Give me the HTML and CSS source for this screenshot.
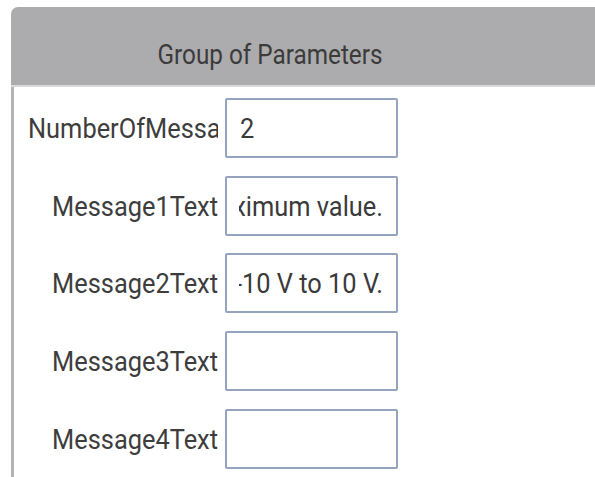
FILE: index.html
```html
<!DOCTYPE html>
<html>
<head>
	<title>Group of Parameters</title>
	<meta charset="utf-8">
	<meta name="viewport" content="width=device-width, initial-scale=1">
	<link rel="stylesheet" href="styles.css">
</head>
<body>

	<div class="panel">
		<div class="panel-header">
			<h1>Group of Parameters</h1>
		</div>
		<div class="panel-body">
			<div class="row">
				<label>NumberOfMessages</label>
				<div class="field first"><div class="clip"><span class="value">2</span></div></div>
			</div>
			<div class="row">
				<label>Message1Text</label>
				<div class="field"><div class="clip"><span class="value">Input exceeds the maximum value.</span></div></div>
			</div>
			<div class="row">
				<label>Message2Text</label>
				<div class="field"><div class="clip"><span class="value">Allowed range is -10 V to 10 V.</span></div></div>
			</div>
			<div class="row">
				<label>Message3Text</label>
				<div class="field"><div class="clip"></div></div>
			</div>
			<div class="row">
				<label>Message4Text</label>
				<div class="field"><div class="clip"></div></div>
			</div>
		</div>
	</div>

</body>
</html>
```

FILE: styles.css
```css
* {
	font-family: Roboto, "Liberation Sans", sans-serif;
	box-sizing: border-box;
}
body {
	background-color: #fff;
	margin: 0;
	padding: 7px 0 0 11px;
}

div.panel {
	border-top-left-radius: 7px;
	overflow: hidden;
	height: 470px;
}
div.panel-header {
	background-color: #acabad;
	height: 80px;
	border-bottom: 2px solid #d9d9d9;
	padding-right: 66px;
	display: flex;
	align-items: center;
	justify-content: center;
}
h1 {
	margin: 0;
	padding-top: 14px;
	font-size: 24.3px;
	font-weight: normal;
	color: #3b3b3b;
	transform: scaleY(1.16);
}

div.panel-body {
	border-left: 3px solid #b4b4b4;
	height: 100%;
	padding: 11px 0 0 14px;
	display: flex;
	flex-direction: column;
	gap: 17.7px;
}
div.row {
	display: flex;
	align-items: center;
	gap: 7px;
}
label {
	width: 190px;
	text-align: right;
	white-space: nowrap;
	overflow: hidden;
	font-size: 25.4px;
	color: #3d3d3d;
	transform: scaleY(1.07);
}
div.field {
	width: 173px;
	height: 60px;
	border: 2px solid #93a3c0;
	border-radius: 2px;
	padding: 0 13px 0 12px;
	display: flex;
	align-items: center;
}
div.clip {
	width: 100%;
	display: flex;
	justify-content: flex-end;
	overflow: hidden;
	white-space: nowrap;
}
div.field.first div.clip {
	justify-content: flex-start;
	padding-left: 1px;
}
span.value {
	flex-shrink: 0;
	font-size: 25.4px;
	color: #3a3a3a;
	transform: scaleY(1.07);
}
```
